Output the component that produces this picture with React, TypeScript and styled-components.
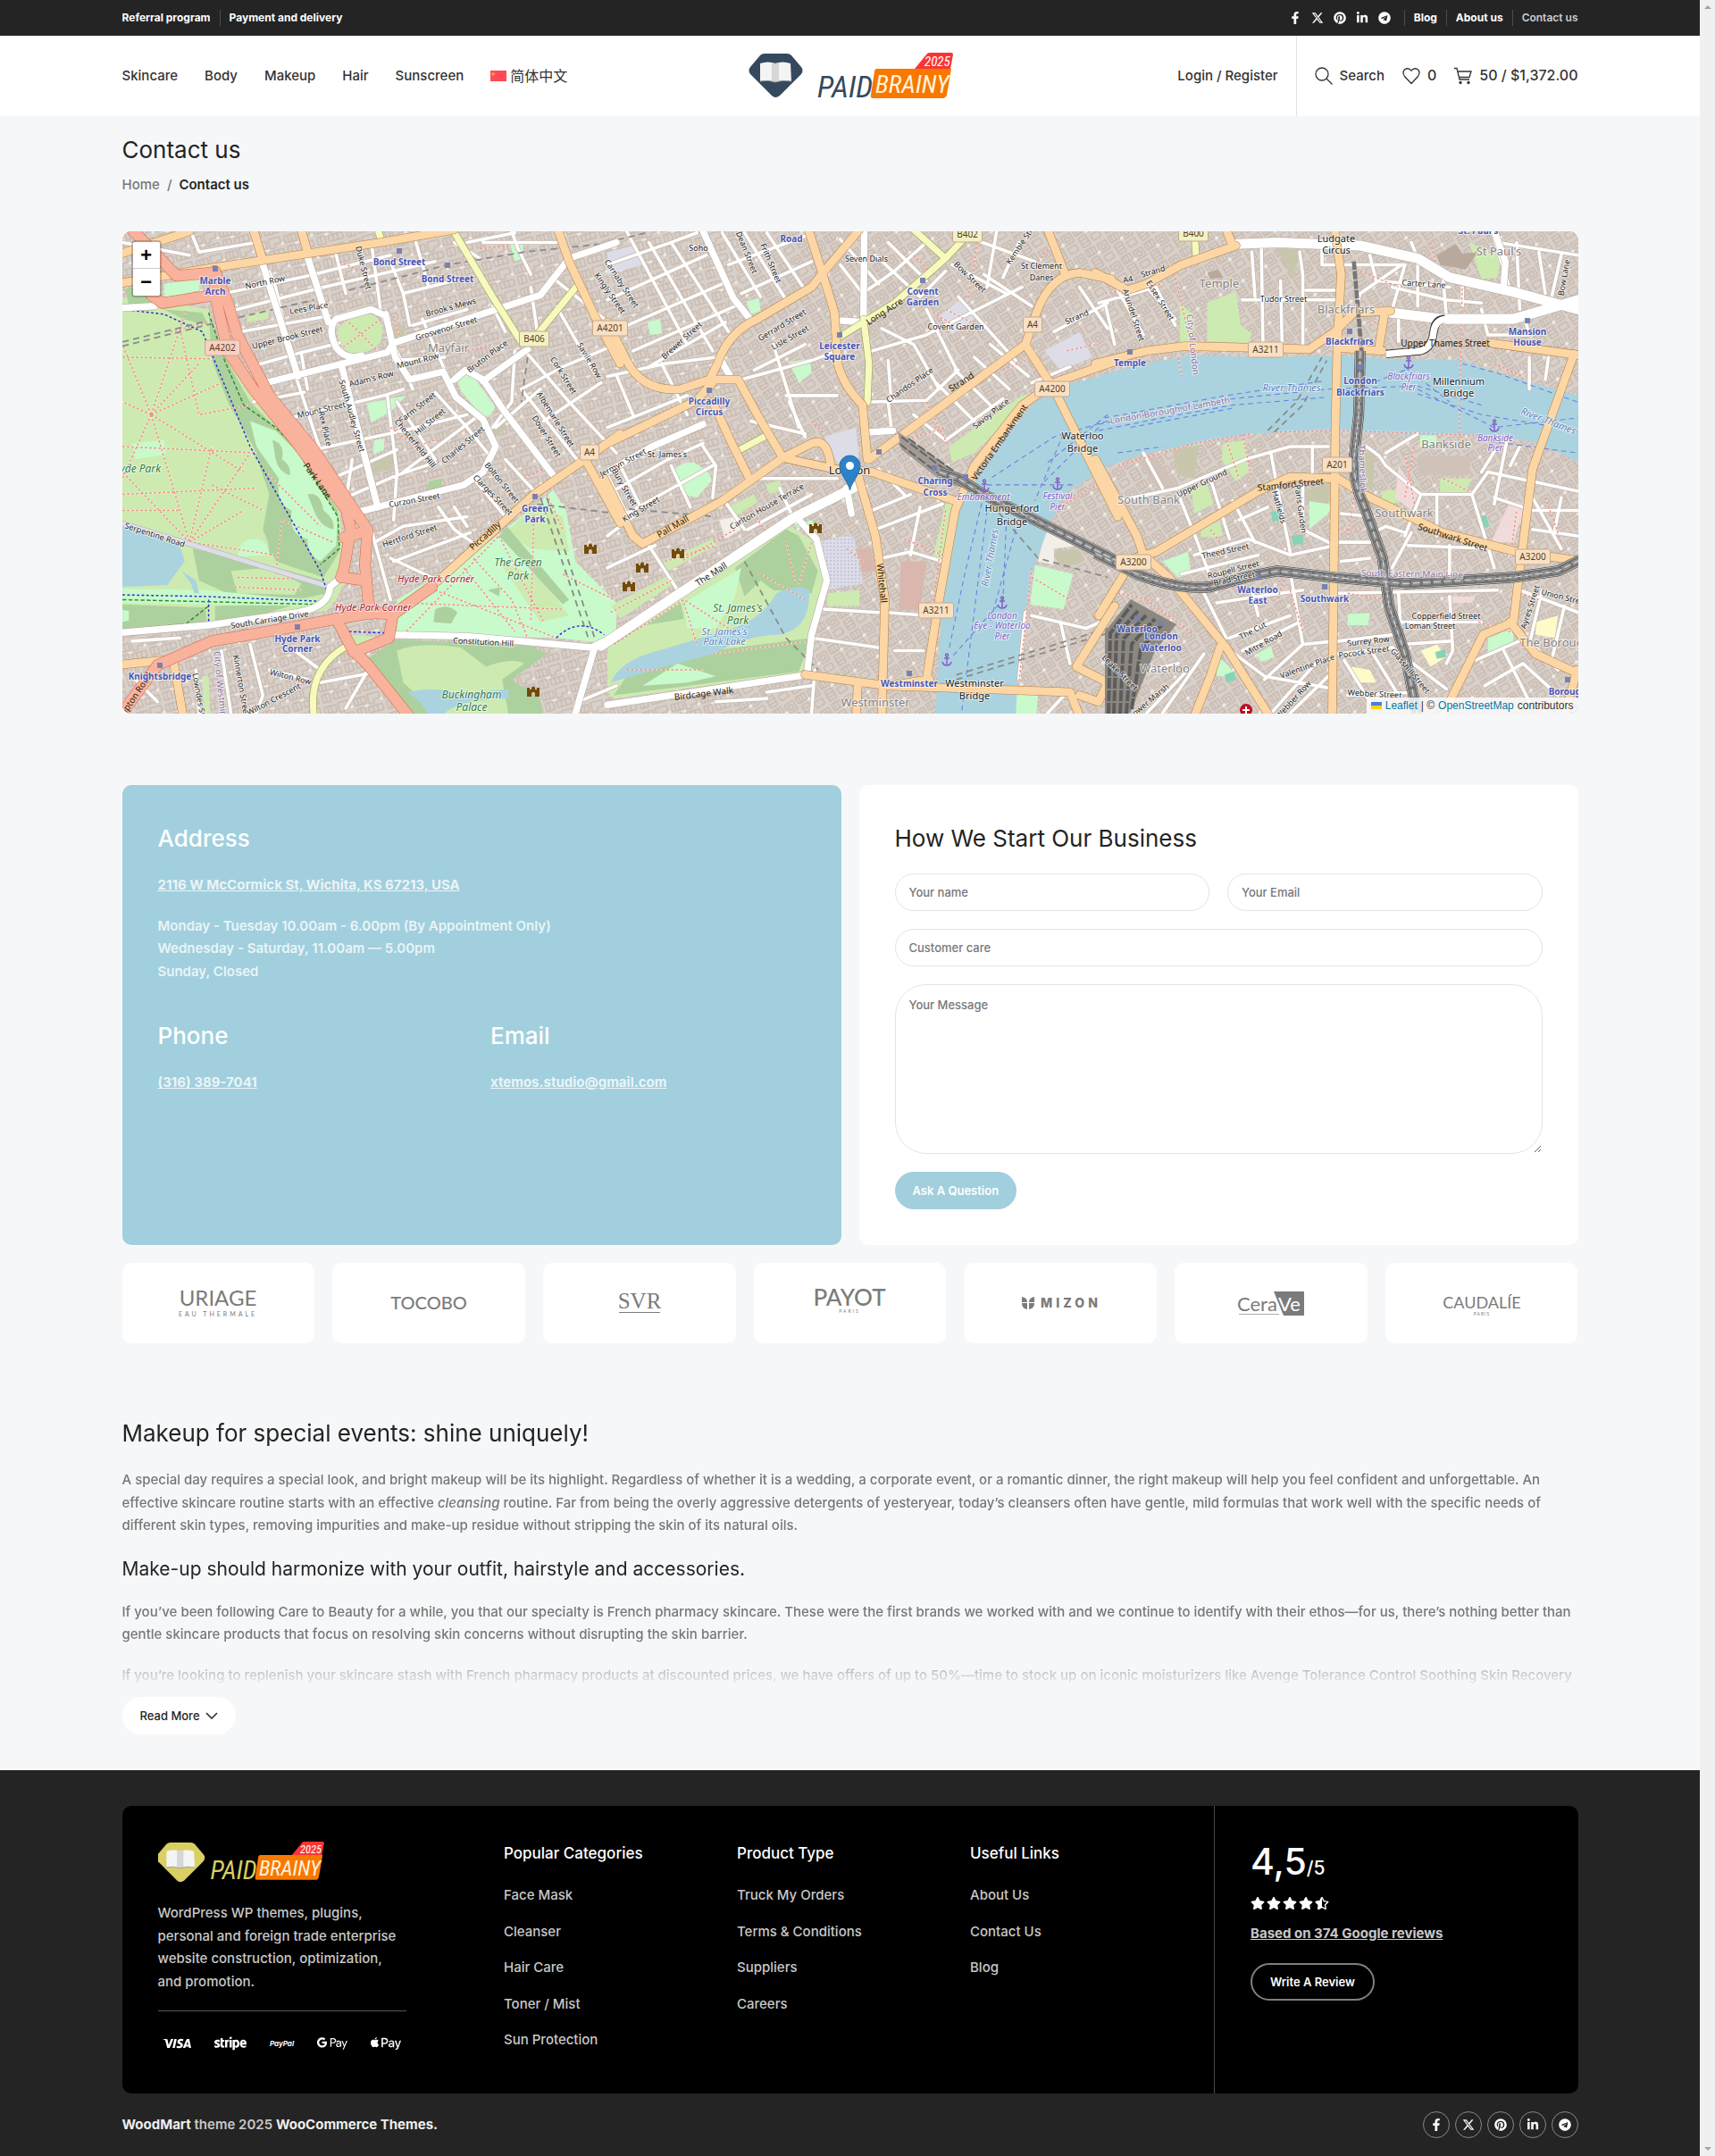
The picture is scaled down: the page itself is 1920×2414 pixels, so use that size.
import React from "react";
import styled, { createGlobalStyle, css } from "styled-components";
import { FaFacebookF, FaPinterest, FaLinkedinIn, FaTelegram, FaStripe, FaGooglePay, FaApplePay, FaStar, FaRegStar, FaStarHalf } from "react-icons/fa";
import { FaXTwitter } from "react-icons/fa6";
import { SiVisa } from "react-icons/si";

const sans = `Inter, "Noto Sans CJK SC", sans-serif`;

const GlobalStyle = createGlobalStyle`
  *, *::before, *::after { box-sizing: border-box; }
  body { margin: 0; background: #f6f7f9; color: #777; font-family: ${sans}; font-size: 15px; font-weight: 500; line-height: 1.7; }
  h1, h2, h3, h4, p, ul { margin: 0; padding: 0; }
  ul { list-style: none; }
  a { color: inherit; text-decoration: none; }
  button, input, textarea { font-family: inherit; margin: 0; }
`;

/* ---------- frame ---------- */

const Frame = styled.div`
  display: grid;
  grid-template-columns: minmax(0, 1fr) 17px;
`;

const ScrollTrack = styled.div`
  display: flex;
  flex-direction: column;
  justify-content: space-between;
  align-items: center;
  padding: 6px 0;
  background: #f0f0f0;
`;

const Arrow = styled.span<{ $down?: boolean }>`
  border: 4px solid transparent;
  ${(p) => (p.$down ? "border-top-color: #a3a3a3; border-bottom: 0;" : "border-bottom-color: #a3a3a3; border-top: 0;")}
`;

const Container = styled.div`
  max-width: 1660px;
  margin: 0 auto;
  padding: 0 15px;
`;

/* ---------- top bar ---------- */

const TopBar = styled.div`
  background: #242424;
  color: #fff;
`;

const TopRow = styled(Container)`
  display: flex;
  justify-content: space-between;
  align-items: center;
  height: 40px;
`;

const TopGroup = styled.div`
  display: flex;
  align-items: center;
  gap: 10px;
`;

const TopLink = styled.a<{ $muted?: boolean }>`
  font-size: 12px;
  font-weight: ${(p) => (p.$muted ? 600 : 700)};
  line-height: 18px;
  color: ${(p) => (p.$muted ? "#ccc" : "#fff")};
  & + & {
    padding-left: 10px;
    border-left: 1px solid #4c4c4c;
  }
`;

const TopSocial = styled.div`
  display: flex;
  align-items: center;
  gap: 11px;
  padding: 0 5px;
  a { display: flex; }
`;

const TopDivider = styled.span`
  width: 1px;
  height: 18px;
  background: #4c4c4c;
`;

/* ---------- header ---------- */

const Header = styled.header`
  background: #fff;
  color: #333;
`;

const HeaderRow = styled(Container)`
  display: grid;
  grid-template-columns: 1fr auto 1fr;
  align-items: center;
  height: 90px;
`;

const Nav = styled.nav`
  display: flex;
  gap: 30px;
  line-height: 24px;
`;

const NavLink = styled.a`
  display: flex;
  align-items: center;
  gap: 4px;
`;

const CjkLink = styled(NavLink)`
  font-size: 16px;
  font-weight: 400;
`;

const LogoLink = styled.a`
  display: flex;
`;

const Tools = styled.div`
  display: flex;
  justify-content: flex-end;
  align-items: center;
  align-self: stretch;
  gap: 20px;
`;

const ToolDivider = styled.span`
  align-self: stretch;
  width: 1px;
  background: #e2e2e2;
`;

const ToolLink = styled.a<{ $count?: boolean }>`
  display: flex;
  align-items: center;
  gap: 8px;
  font-size: ${(p) => (p.$count ? "16px" : "15px")};
`;

/* ---------- page title ---------- */

const PageTitle = styled.section`
  padding: 18px 0 40px;
`;

const Heading = styled.h2<{ $light?: boolean; $small?: boolean }>`
  font-size: ${(p) => (p.$small ? "21px" : "26px")};
  line-height: ${(p) => (p.$small ? "31px" : "39px")};
  font-weight: ${(p) => (p.$light ? 500 : 400)};
  color: ${(p) => (p.$light ? "#fff" : "#242424")};
`;

const Crumbs = styled.nav`
  display: flex;
  gap: 8px;
  margin-top: 8px;
  line-height: 24px;
  span:last-child { color: #242424; font-weight: 600; }
`;

/* ---------- map ---------- */

const MapBox = styled.div`
  position: relative;
  height: 540px;
  overflow: hidden;
  border-radius: 10px;
  background: #d9d0c9;
  > svg { display: block; width: 100%; height: 100%; }
`;

const ZoomControl = styled.div`
  position: absolute;
  top: 10px;
  left: 10px;
  display: flex;
  flex-direction: column;
  border: 2px solid rgba(0, 0, 0, 0.2);
  border-radius: 4px;
  background-clip: padding-box;
`;

const ZoomButton = styled.button`
  width: 30px;
  height: 30px;
  padding: 0;
  border: 0;
  background: #fff;
  color: #000;
  font: bold 22px/34px "Liberation Mono", monospace;
  &:first-child { border-bottom: 1px solid #ccc; border-radius: 2px 2px 0 0; }
  &:last-child { border-radius: 0 0 2px 2px; }
`;

const Attribution = styled.div`
  position: absolute;
  right: 0;
  bottom: 0;
  display: flex;
  align-items: center;
  gap: 4px;
  padding: 0 5px;
  background: rgba(255, 255, 255, 0.8);
  color: #333;
  font: 12px/18px "Liberation Sans", Arial, sans-serif;
  a { color: #0078a8; }
`;

/* ---------- contact cards ---------- */

const Cards = styled.div`
  display: grid;
  grid-template-columns: 1fr 1fr;
  gap: 20px;
  margin-top: 80px;
`;

const Card = styled.section<{ $blue?: boolean }>`
  padding: 40px;
  border-radius: 10px;
  background: ${(p) => (p.$blue ? "#a1cfdd" : "#fff")};
`;

const InfoText = styled.p`
  margin-top: 20px;
  font-weight: 600;
  color: rgba(255, 255, 255, 0.8);
`;

const InfoLink = styled.a`
  font-weight: 700;
  text-decoration: underline;
`;

const InfoColumns = styled.div`
  display: grid;
  grid-template-columns: 1fr 1fr;
  gap: 20px;
  margin-top: 40px;
`;

const Form = styled.form`
  display: grid;
  grid-template-columns: 1fr 1fr;
  gap: 20px;
  margin-top: 20px;
`;

const Field = styled.label<{ $wide?: boolean }>`
  display: flex;
  ${(p) => p.$wide && "grid-column: 1 / -1;"}
`;

const fieldStyle = css`
  width: 100%;
  border: 1px solid #e4e4e4;
  border-radius: 35px;
  background: #fff;
  color: #333;
  font-size: 13px;
  font-weight: 500;
  outline: 0;
  &::placeholder { color: #777; opacity: 1; }
`;

const TextInput = styled.input`
  ${fieldStyle}
  height: 42px;
  padding: 0 15px;
`;

const TextArea = styled.textarea`
  ${fieldStyle}
  height: 190px;
  padding: 12px 15px;
  line-height: 20px;
  resize: vertical;
`;

const Pill = styled.button<{ $tone: "blue" | "white" | "outline" }>`
  display: inline-flex;
  align-items: center;
  justify-content: center;
  gap: 6px;
  height: 42px;
  padding: 0 20px;
  border-radius: 35px;
  border: 0;
  font-size: 13px;
  line-height: 18px;
  font-weight: 600;
  cursor: pointer;
  justify-self: start;
  ${(p) => p.$tone === "blue" && "background: #a1cfdd; color: #fff;"}
  ${(p) => p.$tone === "white" && "background: #fff; color: #242424; font-weight: 500;"}
  ${(p) => p.$tone === "outline" && "background: transparent; color: #fff; border: 2px solid #7f7f7f;"}
`;

/* ---------- brands ---------- */

const Brands = styled.ul`
  display: grid;
  grid-template-columns: repeat(7, 1fr);
  gap: 20px;
  margin-top: 20px;
`;

const Brand = styled.li`
  display: flex;
  align-items: center;
  justify-content: center;
  height: 90px;
  border-radius: 10px;
  background: #fff;
  svg { fill: #7a7b7b; }
`;

/* ---------- article ---------- */

const Article = styled.article`
  height: 300px;
  margin-top: 81px;
  overflow: hidden;
  -webkit-mask-image: linear-gradient(#000 262px, transparent 304px);
  mask-image: linear-gradient(#000 262px, transparent 304px);
  h2, h3 { margin-bottom: 20px; }
  p { margin-bottom: 20px; }
`;

const ReadMore = styled.div`
  padding: 15px 0 40px;
`;

/* ---------- footer ---------- */

const Footer = styled.footer`
  padding-top: 40px;
  background: #242424;
  color: #c8c8c8;
`;

const FooterBox = styled.div`
  display: grid;
  grid-template-columns: 3fr 1fr;
  border-radius: 10px;
  background: #000;
`;

const FooterMain = styled.div`
  display: grid;
  grid-template-columns: minmax(0, 1fr) repeat(3, 261px);
  padding: 40px 12px 40px 40px;
`;

const About = styled.div`
  width: 278px;
  svg { display: block; }
  p { margin-top: 20px; padding-bottom: 20px; border-bottom: 1px solid #555; }
`;

const Payments = styled.ul`
  display: flex;
  justify-content: space-between;
  align-items: center;
  height: 32px;
  margin-top: 20px;
  padding: 0 5px;
  color: #fff;
`;

const PayPalMark = styled.li`
  font-size: 8px;
  line-height: 12px;
  font-weight: 700;
  font-style: italic;
`;

const LinkTitle = styled.h4`
  font-size: 17px;
  line-height: 27px;
  font-weight: 500;
  color: #fff;
`;

const LinkList = styled.ul`
  display: grid;
  gap: 15px;
  margin-top: 20px;
`;

const Review = styled.div`
  padding: 40px;
  border-left: 1px solid #4a4a4a;
`;

const Score = styled.p`
  font-size: 41px;
  line-height: 45px;
  color: #fff;
  small { font-size: 21px; }
`;

const Stars = styled.div`
  display: flex;
  gap: 2px;
  margin: 9px 0 13px;
  color: #fff;
`;

const HalfStar = styled.span`
  position: relative;
  display: flex;
  svg + svg { position: absolute; left: 0; top: 0; }
`;

const ReviewLink = styled.a`
  display: block;
  margin-bottom: 20px;
  font-weight: 700;
  text-decoration: underline;
`;

const Bottom = styled.div`
  display: flex;
  justify-content: space-between;
  align-items: center;
  height: 70px;
  font-weight: 600;
  b { font-weight: 700; color: #eee; }
`;

const Circles = styled.div`
  display: flex;
  gap: 6px;
`;

const Circle = styled.a`
  display: flex;
  align-items: center;
  justify-content: center;
  width: 30px;
  height: 30px;
  border: 1px solid #888;
  border-radius: 50%;
  color: #fff;
`;

const socials = [
  { name: "Facebook", Icon: FaFacebookF },
  { name: "X", Icon: FaXTwitter },
  { name: "Pinterest", Icon: FaPinterest },
  { name: "LinkedIn", Icon: FaLinkedinIn },
  { name: "Telegram", Icon: FaTelegram },
];

/* ---------- logo ---------- */

const narrow = `"Roboto Condensed", Roboto, sans-serif`;

function Logo({ dark }: { dark?: boolean }) {
  const tone = dark ? "#d9cf62" : "#34495e";
  return (
    <svg width={dark ? 186 : 230} height={dark ? 47 : 56} viewBox={dark ? "4 2 205 52" : "0 0 230 56"} role="img" aria-label="Paid Brainy 2025">
      <path fill={tone} d="M14 5 Q16 3 19 3 H44 Q47 3 49 5 L60 18 Q63 22 60 26 L36 50 Q31 54 27 50 L3 26 Q0 22 3 18 Z" />
      <path fill="#f4f4f4" d="M14 14 Q23 11 31 14 Q39 11 48 14 L49 34 Q39 32 31 35 Q23 32 14 34 Z" />
      <path fill="#c9c9c9" d="M27 13 L31 14 L35 13 L35 34 L31 35 L27 34 Z" opacity="0.7" />
      <path stroke="#999" strokeWidth="1" fill="none" d="M14 34 Q23 32 31 35 Q39 32 49 34" />
      <g transform={dark ? "translate(-4 2) scale(0.927)" : "translate(0 2)"}>
        <path fill="#fb3434" d="M187 18 L201 1 Q202 0 204 0 H228 Q230 0 230 2 L227 18 Z" />
        <path fill="#f87800" d="M145 18 H228 L223 47 Q222 51 218 51 H141 Q137 51 138 47 L142 21 Q142 18 145 18 Z" />
        <text x="78" y="50" fontFamily={narrow} fontStyle="italic" fontWeight="400" fontSize="34" fill={tone}>PAID</text>
        <text x="143" y="45" fontFamily={narrow} fontStyle="italic" fontWeight="400" fontSize="28" fill="#fff3dc">BRAINY</text>
        <text x="198" y="15" fontFamily={narrow} fontStyle="italic" fontWeight="400" fontSize="15" fill="#fff">2025</text>
      </g>
    </svg>
  );
}

/* ---------- map drawing ---------- */

// The map is drawn in three sheets, west to east, each in its own drafting units (2.8 per pixel).
const UNIT = 2.8;
const SHEETS = { a: -7, b: 543, c: 1093 };
type Sheet = keyof typeof SHEETS;

type Layer = { s: Sheet; d: string };

const parks: (Layer & { f: string })[] = [
  { s: "a", f: "#cdebb0", d: "M0 230 L120 240 L290 270 L330 400 L430 540 L560 700 L700 900 L720 1120 L690 1180 L660 1215 L0 1290 Z" },
  { s: "a", f: "#add19e", d: "M290 280 L330 400 L420 560 L560 700 L695 900 L700 1030 L650 1110 L500 1060 L460 960 L480 850 L430 700 L350 560 L300 430 Z" },
  { s: "a", f: "#c8facc", d: "M420 620 L500 650 L570 720 L640 830 L695 920 L690 1010 L640 1060 Q600 1040 600 990 Q540 980 550 900 Q500 880 510 800 L440 700 Z" },
  { s: "a", f: "#add19e", d: "M490 680 Q530 690 520 740 Q550 760 545 790 Q510 780 500 740 Z M600 850 Q640 840 650 900 Q690 930 680 960 Q640 950 620 900 Z M470 930 Q520 900 540 960 Q600 1010 560 1060 L480 1040 Z" },
  { s: "a", f: "#add19e", d: "M30 205 Q80 190 130 215 L120 250 L40 262 Z M150 270 L270 280 L290 320 L210 300 Z" },
  { s: "a", f: "#c8facc", d: "M150 190 L260 175 L262 210 L150 235 Z M385 1020 Q400 985 440 990 Q480 1000 480 1040 L380 1045 Z M50 690 L150 680 L155 725 L60 740 Z" },
  { s: "a", f: "#add19e", d: "M240 1020 L400 1050 L650 1120 L660 1160 L590 1175 L370 1170 L260 1120 Z M20 1195 L280 1205 L285 1262 L20 1272 Z M310 1200 L560 1195 L420 1240 L310 1245 Z" },
  { s: "a", f: "#cdebb0", d: "M360 1090 L480 1080 L580 1130 L560 1165 L380 1160 Z M215 1100 L250 1120 L230 1160 L170 1150 Z" },
  { s: "a", f: "#c8facc", d: "M20 1145 L280 1150 L640 1185 L640 1200 L20 1190 Z M20 1212 L40 1215 L40 1245 L20 1250 Z" },
  { s: "a", f: "#cdebb0", d: "M695 330 Q730 285 800 285 Q850 310 830 370 Q800 410 740 408 Q690 390 695 330 Z M410 285 L480 275 L475 300 L412 310 Z" },
  { s: "a", f: "#c8facc", d: "M1070 490 Q1090 465 1120 480 L1188 575 Q1180 605 1150 608 L1080 525 Z M785 565 L910 540 L860 590 L800 625 Z M810 680 L840 675 L840 710 L805 725 Z M1235 65 L1275 62 L1278 110 L1250 120 Z" },
  { s: "a", f: "#c8facc", d: "M880 1180 L1130 1030 L1320 880 L1370 835 L1410 900 L1440 1060 L1568 1190 L1568 1320 L1380 1300 L880 1290 Z" },
  { s: "a", f: "#cdebb0", d: "M1220 970 L1320 880 L1400 920 L1420 1030 L1300 1020 Z M1200 1060 L1330 1110 L1420 1230 L1330 1250 Z" },
  { s: "a", f: "#add19e", d: "M1225 950 L1420 1180 L1400 1195 L1200 980 Z M1000 1210 Q1040 1190 1070 1220 L1050 1255 L995 1250 Z M1165 1150 L1205 1140 L1200 1170 Z M980 810 L1020 800 L1022 835 L975 835 Z" },
  { s: "a", f: "#c8c7ae", d: "M870 320 L905 320 L905 360 L870 365 Z M1170 640 L1210 610 L1225 640 L1190 670 Z M810 735 L870 725 L870 770 L805 785 Z" },
  { s: "a", f: "#add19e", d: "M780 1370 L880 1305 L1300 1325 L1350 1350 L1240 1430 L1330 1490 L1340 1545 L940 1545 Z" },
  { s: "a", f: "#cdebb0", d: "M880 1340 Q950 1310 1080 1330 L1160 1390 Q1240 1360 1280 1380 L1210 1430 L1230 1540 L1010 1540 L900 1440 Z M740 1290 L850 1300 L740 1330 Z M735 915 L758 960 L735 965 Z M270 1420 L290 1420 L295 1540 L275 1540 Z" },
  { s: "b", f: "#cdebb0", d: "M0 1320 L560 940 L650 1000 L680 1100 L640 1380 L600 1410 L20 1490 L0 1470 Z" },
  { s: "b", f: "#add19e", d: "M400 1080 L560 960 L600 980 L660 1090 L640 1160 L520 1150 L480 1120 L430 1170 Z M20 1480 L60 1420 L330 1340 L640 1300 L600 1405 Z M120 1260 L230 1190 L240 1240 Z" },
  { s: "b", f: "#c8facc", d: "M240 1190 L420 1080 L400 1170 L340 1270 L250 1270 Z M110 1450 L220 1380 L340 1420 L250 1440 Z M640 930 L660 960 L580 950 Z" },
  { s: "b", f: "#c8facc", d: "M205 790 Q210 750 270 750 Q330 780 325 810 L280 860 L240 850 Z M570 435 L635 425 L640 470 L600 500 Z M435 245 L475 235 L480 275 L450 285 Z M125 310 L165 300 L172 345 L135 350 Z" },
  { s: "b", f: "#cdebb0", d: "M175 1060 L330 990 L340 1010 L190 1090 Z M10 1200 L200 1100 L215 1125 L40 1240 Z M380 890 L460 850 L470 875 L400 920 Z M495 820 L540 805 L550 835 L510 850 Z M1070 700 L1300 540 L1340 530 L1150 720 L1080 750 Z M1060 880 L1085 880 L1050 1060 L1020 1050 Z M690 1160 L790 1150 L790 1200 L690 1200 Z" },
  { s: "b", f: "#c8facc", d: "M1340 1070 L1460 1100 L1430 1210 L1325 1195 Z M1265 1480 L1350 1475 L1345 1540 L1265 1540 Z" },
  { s: "b", f: "#c8c7ae", d: "M1405 1030 L1480 1020 L1490 1060 L1440 1080 L1410 1060 Z" },
  { s: "b", f: "#f2efe9", d: "M1370 970 L1420 960 L1480 1010 L1400 1020 L1400 1070 L1350 1060 Z M350 930 L400 920 L420 960 L370 990 Z" },
  { s: "c", f: "#cdebb0", d: "M340 250 L430 215 L445 320 L480 345 L470 375 L340 370 Z M255 250 L300 290 L290 380 L255 380 Z M1160 60 L1260 100 L1250 170 L1200 175 Z M290 830 L340 820 L360 880 L300 910 Z M1070 800 L1170 800 L1150 845 L1070 845 Z M885 840 L945 835 L945 875 L890 880 Z M390 690 L460 680 L470 780 L430 810 L385 740 Z M320 950 L380 935 L390 980 L320 985 Z" },
  { s: "c", f: "#c8facc", d: "M660 870 Q700 855 730 890 L720 910 L660 960 Z M1220 1300 L1300 1270 L1300 1320 L1220 1350 Z M370 1360 Q410 1380 430 1420 L370 1420 Z M495 1350 L540 1325 L550 1360 L510 1375 Z M1010 660 L1060 665 L1055 705 L1005 700 Z M200 1060 L280 1030 L290 1100 L250 1110 Z M780 1225 L850 1222 L845 1260 L780 1260 Z" },
  { s: "c", f: "#c8c7ae", d: "M555 75 L630 85 L610 180 Z M230 710 L315 695 L300 800 L250 790 Z M830 700 L865 710 L860 830 L835 840 Z M640 840 L730 810 L720 880 L650 870 Z" },
  { s: "b", f: "#dddde8", d: "M655 1000 L770 975 L800 1130 L680 1150 Z M680 670 L780 640 L790 760 L720 750 Z M1040 290 L1110 235 L1150 300 L1080 350 Z M0 90 L80 70 L110 130 L0 160 Z M1370 400 L1480 340 L1520 420 L1420 460 Z" },
  { s: "b", f: "#d9b6ae", d: "M920 1060 L1000 1060 L980 1215 L915 1210 Z M780 1020 L825 1020 L840 1090 L800 1095 Z" },
  { s: "c", f: "#b9a99c", d: "M1060 100 L1120 65 L1140 95 L1190 90 L1150 145 L1070 130 Z M340 155 L375 145 L390 170 L350 175 Z" },
  { s: "c", f: "#d0c2b9", d: "M1000 730 L1170 730 L1160 790 L1000 790 Z M120 740 L170 720 L240 820 L200 850 Z" },
  { s: "c", f: "#f1dada", d: "M1290 870 L1340 880 L1300 1000 L1230 1000 Z M1090 1170 L1180 1170 L1170 1190 L1090 1190 Z M940 760 L1000 850 L980 900 L930 860 Z" },
  { s: "c", f: "#fdfbc8", d: "M790 1390 L850 1400 L870 1440 L800 1440 Z M1010 1340 L1060 1320 L1090 1360 L1040 1390 Z M1370 1250 L1440 1230 L1430 1300 L1370 1290 Z" },
  { s: "c", f: "#87d3b5", d: "M540 905 L575 900 L580 930 L545 935 Z M605 980 L640 975 L642 1005 L610 1008 Z M1190 920 L1215 915 L1225 950 L1200 955 Z M1055 1345 L1085 1335 L1090 1360 L1060 1365 Z M395 1415 L425 1405 L430 1430 L400 1440 Z" },
];

const water: Layer[] = [
  { s: "a", d: "M0 930 L20 940 L200 1010 L215 1060 L160 1135 L0 1140 Z M205 1090 L250 1120 L260 1160 L245 1160 L235 1130 Z" },
  { s: "a", d: "M915 1470 Q1000 1450 1080 1475 L1230 1460 L1230 1490 Q1070 1490 1020 1545 L980 1545 Q960 1500 915 1470 Z" },
  { s: "b", d: "M10 1440 Q40 1370 160 1340 L360 1280 Q480 1250 530 1160 Q600 1130 632 1150 Q640 1270 540 1290 Q440 1290 330 1350 L180 1390 L60 1425 Z" },
  { s: "b", d: "M1600 470 L1460 500 L1340 560 L1260 660 L1190 760 L1110 870 L1075 1000 L1050 1200 L1028 1545 L1280 1545 L1290 1350 L1330 1100 L1380 960 L1430 850 L1600 740 Z" },
  { s: "c", d: "M0 478 L120 445 L280 415 L560 420 L750 415 L900 425 L1140 430 L1250 470 L1520 545 L1520 755 L1380 690 L1250 665 L1000 665 L720 650 L480 660 L300 690 L120 730 L0 770 Z" },
];

const alleys: Layer[] = [
  { s: "a", d: "M340 220 L600 165 L860 100 M360 275 L650 200 L1000 120 M390 340 L670 290 M420 450 L580 405 L700 375 M430 560 L590 530 M550 610 L840 540 L900 520 M620 710 L900 650 L1100 600 M700 790 L880 710 M720 860 L880 790 L1000 750 M480 150 L500 200 L560 470 L640 710 M690 100 L720 220 M800 60 L830 280 L930 520 M850 540 L880 780 L870 930 M930 320 L1100 270 M900 220 L920 320 M580 405 L600 520" },
  { s: "a", d: "M870 430 L1030 420 M960 300 L1030 460 M1000 530 L1100 640 L1180 740 M880 560 L1000 740 M740 740 L720 870 M900 780 L1060 660 L1140 600 M1250 400 L1240 560 L1180 640 M1270 520 L1400 450 L1568 380 M1290 410 L1420 560 L1568 720 M1380 260 L1500 470 M1270 520 L1460 760 M1190 640 L1330 520 M1340 620 L1520 500 M800 960 L860 1180 M810 1000 L900 950 L1100 920 M870 1060 L1110 970 M860 1050 L1010 1120 M1010 890 L1060 960 L1130 1010 M1220 740 L1320 850 M1060 890 L1100 950 M1120 800 L1220 920" },
  { s: "a", d: "M330 1340 L360 1536 M420 1320 L460 1480 L440 1536 M250 1400 L260 1536 M480 1400 L600 1430 M560 1340 L640 1400 M640 1440 L800 1410 M60 1430 L130 1500 M50 1310 L200 1300 M720 1520 L790 1400 M1450 1500 L1568 1450 M1100 60 L1250 30 M1060 60 L1140 110 M1240 25 L1260 80 L1300 160 M1150 60 L1380 60 M240 40 L260 90 L440 60 M1380 180 L1568 330 M20 60 L230 100 M860 120 L900 220 L1060 180 M940 60 L980 200 M1180 260 L1220 340 M1300 200 L1320 340" },
  { s: "b", d: "M60 25 L250 380 M130 60 L330 400 M200 60 L380 340 M0 130 L200 60 L280 30 M0 240 L310 100 M40 330 L360 190 M80 400 L400 260 M130 450 L370 310 M360 30 L480 230 M430 30 L560 240 M500 30 L620 210 M380 130 L620 40 M420 220 L640 120 M170 440 L250 600 M0 480 L180 440 L340 420 M30 480 L80 600 M460 460 L620 380 M420 490 L640 430 L720 400 M520 380 L600 640 M560 540 L720 540 M450 620 L620 660 M570 560 L620 670" },
  { s: "b", d: "M0 640 L250 540 M0 850 L190 740 L300 690 M40 760 L110 900 M0 790 L60 910 L330 760 M200 760 L260 890 M300 700 L340 760 L330 860 M360 860 L430 960 M540 830 L590 940 M440 960 L640 850 M470 800 L720 800 M0 1080 L150 1010 M130 1010 L220 1150 M0 980 L80 920 M730 130 L800 220 L900 150 L1000 60 M730 50 L850 190 M840 100 L980 230 L1060 150 M880 60 L1000 180 M830 400 L1000 350 L1300 200 M860 330 L960 380 L1040 520 M1000 270 L1100 470 M1100 230 L1280 430 M1180 160 L1330 260 M1080 130 L1250 220 M830 560 L1000 555 L1100 460 M880 430 L890 560 M880 560 L890 640 L820 650" },
  { s: "b", d: "M1030 500 L1150 620 M1090 460 L1200 570 M1150 420 L1260 520 M1200 380 L1320 480 M960 600 L1060 680 L1240 550 M1330 500 L1450 450 M1120 40 L1340 120 M1220 25 L1190 200 M1290 60 L1240 170 M1400 340 L1568 250 M1480 200 L1568 330 M830 900 L950 850 M840 960 L1050 880 M860 1050 L950 1030 L1050 1060 M980 890 L950 1040 M880 1220 L1000 1230 M640 1300 L850 1330 M680 1210 L850 1220 M650 1400 L640 1536 M500 1470 L640 1450 M340 1500 L500 1490 M900 1340 L990 1340 M1330 1230 L1500 1270 L1568 1240 M1450 1460 L1380 1536 M1310 1220 L1290 1430 M1450 1380 L1420 1250 M850 770 L930 850" },
  { s: "c", d: "M0 250 L180 200 L240 320 M60 210 L140 350 M20 250 L50 380 M150 200 L240 300 M510 80 L515 380 M570 180 L575 380 M630 90 L640 160 L640 380 M700 70 L700 130 L960 130 M450 240 L740 240 M650 210 L740 210 M480 90 L490 230 M800 290 L820 220 L950 130 M850 100 L870 180 L1100 200 M960 130 L920 270 M1000 130 L1000 260 M920 200 L1090 240 L1200 250 M1080 180 L1090 290 M1140 190 L1140 260 M1240 50 L1290 210 M1310 60 L1320 270 M1380 90 L1400 220 M1450 100 L1420 230 M1250 60 L1504 100 M980 60 L1000 110 M1200 270 L1220 350 L1350 350 L1330 280 M940 300 L940 370 M1350 420 L1350 520 M1410 420 L1400 490" },
  { s: "c", d: "M60 870 L250 830 L460 740 L600 700 L720 700 M140 720 L200 830 M250 850 L310 1000 L350 1110 M350 800 L410 990 M540 720 L560 830 L600 1030 M670 700 L670 800 M640 820 L640 960 L740 1010 M420 870 L490 1000 M440 930 L530 890 M300 1040 L470 990 L600 1040 L740 1010 M260 1100 L500 1040 M330 1160 L400 1300 M370 1190 L500 1170 L640 1150 M410 1300 L600 1230 M450 1340 L630 1250 M480 1150 L500 1230 M600 1090 L640 1320 L740 1310 M520 1430 L640 1320 M400 1330 L520 1420 L740 1460 M540 1536 L680 1380 M600 1536 L720 1420 M840 700 L880 730 L900 760 L1010 850 L960 980 M900 720 L1000 660 M1010 850 L1170 850 L1220 780 L1504 840 M1170 850 L1240 1080 M1060 980 L1060 850 M860 970 L900 950 L960 970 M1240 860 L1330 890" },
  { s: "c", d: "M980 970 L920 1080 M970 1010 L1240 1020 M1100 1010 L1100 1100 M760 910 L860 920 M750 1000 L850 1000 M850 1050 L760 1060 M750 1160 L1250 1150 M940 1160 L950 1320 M950 1250 L1200 1250 M1100 1170 L1110 1340 L1090 1380 M950 1320 L1100 1310 M750 1310 L920 1290 M750 1350 L920 1330 L1090 1460 M780 1480 L1000 1470 M860 1350 L940 1480 M770 1370 L850 1500 M1200 780 L1250 700 M1280 680 L1240 880 M1290 760 L1320 700 M1340 900 L1504 900 M1450 860 L1430 960 M1320 1150 L1504 1220 M1390 1150 L1350 1320 M1460 1200 L1420 1370 M1180 1370 L1340 1300 L1440 1400 M1210 1450 L1330 1380 L1440 1480 M1270 1340 L1350 1500 M40 1430 L250 1380 M200 1536 L330 1350 M150 1536 L280 1400 M1360 860 L1450 1020 M1360 960 L1500 980" },
];

const lanes: Layer[] = [
  { s: "a", d: "M460 130 L570 480 M600 105 L665 310 M450 505 L850 405 L870 375 L1330 225 L1420 110 L1568 60 M845 285 L875 420 L920 490 L1025 465 M1025 465 L1065 545 L1150 615 L1190 700 L1150 780 L1090 820 L760 905 M1060 490 L1095 460 L1150 490 L1210 580 L1370 790 M1150 495 L1290 395 M705 440 L820 890 M690 300 Q660 330 690 390 Q720 430 770 415 M690 300 L800 270 L845 290 M0 1285 L290 1260 L570 1220 Q670 1200 670 1140 L700 1115 M870 1290 L1100 1295 L1490 1330 L1568 1290 M1500 1330 L1440 1536 M20 265 L120 260" },
  { s: "b", d: "M0 1510 L630 1415 M600 930 L655 990 L688 1120 L640 1290 L625 1420 M300 25 L395 235 L455 310 M350 420 L385 480 M805 25 L803 290 M735 305 L800 310 M0 780 L140 700 L300 630 M815 655 L895 650 M750 830 L765 910" },
  { s: "c", d: "M1240 25 L1275 120 L1270 190" },
];

const avenues: Layer[] = [
  { s: "b", d: "M-20 1325 L580 925 L780 825" },
  { s: "c", d: "M430 65 L560 60 L820 70 L1000 110 L1100 170 L1300 215 L1520 275 M915 280 L1080 300 L1300 300 L1520 235" },
];

const yellow: Layer[] = [
  { s: "a", d: "M1055 20 L1180 230 L1275 380 M1315 355 L1450 190 M820 20 L830 50 M620 1545 Q600 1400 715 1330" },
  { s: "b", d: "M960 20 L1060 110 L1130 35 M1060 110 L900 250 L730 355 M803 300 L820 440 L815 560 M415 710 L490 670" },
  { s: "c", d: "M300 25 L305 100" },
];

const primary: Layer[] = [
  { s: "a", d: "M0 190 L300 140 L600 95 L830 60 L1060 20 M430 20 L458 110 M580 20 L602 95 M1385 20 L1420 120 L1500 290 L1580 440 M900 1200 L1010 1120 L1200 950 L1310 850 L1470 740 L1580 660 M1470 740 L1580 940 M0 1385 L150 1370 M180 1375 L210 1545 M0 100 L230 25" },
  { s: "b", d: "M0 310 L60 430 Q110 530 230 520 L320 490 L410 490 L470 600 L550 735 M-10 695 L280 555 L330 500 M320 490 L345 440 Q380 340 470 300 L640 200 L680 150 L790 20 M630 20 L672 150 L712 280 L722 440 Q740 510 800 570 L815 740 M330 560 L390 690 L440 790 M550 735 L360 870 L110 1005 L80 980 L-10 800 M550 735 L640 690 Q690 670 700 760 M550 735 L710 770 L830 780 L1090 870" },
  { s: "b", d: "M820 740 L1310 380 L1345 280 Q1390 160 1480 155 L1580 175 M1380 20 L1435 160 M1310 380 L1400 520 L1500 720 L1600 920 M780 770 L840 980 L870 1180 L860 1545 M620 1415 L880 1450 L1010 1430 M1000 1430 L1040 1180 L1090 900 L1150 760 L1300 570 L1400 500 L1600 430 M880 1450 L1450 1470 L1480 1545 M780 1545 L785 1440 M1590 1200 L1470 1390 L1568 1440 L1540 1500 L1480 1480" },
  { s: "c", d: "M-10 155 L90 210 L150 190 L260 130 L430 70 M400 20 L420 70 M740 20 L760 160 L748 380 L742 640 L732 1545 M-10 440 L150 400 L270 385 L480 390 L660 395 L740 340 L800 280 L915 275 M895 290 L880 380 M750 390 L890 400 M1225 375 L1520 415 M1490 410 L1360 770 L1312 1150 L1300 1250 L1205 1290 L1110 1480 L1080 1545" },
  { s: "c", d: "M180 1030 L500 840 L600 795 L750 800 L830 850 L1080 970 L1310 1030 L1520 1060 M-10 740 L120 980 L140 1040 L220 1110 L400 1330 L535 1545 M180 1030 L110 1050 L0 1230 M380 1330 L350 1420 L300 1545 M1290 1250 L1370 1350 L1520 1420 M1500 1400 L1460 1545" },
];

const trunk: Layer[] = [
  { s: "a", d: "M50 20 L190 165 L300 155 M110 225 L145 250 L310 225 M310 150 L310 225 L350 400 L430 520 L560 680 L722 900 L735 960 L715 1080 L705 1110 M310 150 L350 250 L380 350 L480 540 L620 710 L740 890 L788 960 L780 1070 L790 1180 L800 1225 M0 1560 L130 1385 L300 1310 L560 1265 L690 1240 L800 1222 L870 1225 L990 1140 M690 1240 L740 1335 L790 1385 L930 1560 M745 1345 L855 1300 L868 1225 M715 985 L785 965 M712 1110 L780 1120" },
];

const rails: Layer[] = [
  { s: "b", d: "M1040 780 L1100 800 L1180 850 L1400 960 L1600 1060" },
  { s: "c", d: "M-10 1035 L120 1100 Q250 1150 350 1140 L480 1105 L560 1090 L740 1110 L960 1130 L1300 1110 L1440 1090 L1520 1050 M820 400 L815 600 L800 740 Q800 820 830 880 L890 1050 L910 1200 L960 1350 L1000 1545" },
];

const footways: Layer[] = [
  { s: "a", d: "M20 420 L300 425 M110 600 L20 380 M110 600 L220 270 M110 600 L20 560 M110 600 L260 440 M110 600 L400 780 M110 600 L230 1000 M110 600 L20 800 M110 600 L330 500 M230 1000 L20 780 M230 1000 L300 700 M230 1000 L420 720 M230 1000 L500 1040 M230 1000 L400 900 M20 850 L440 830 M500 1100 L520 930 L680 1000 M470 780 L640 950 M900 1290 L1200 980 M900 1190 L1400 1210 M1200 980 L1340 1250 M1090 1080 L1250 1280 M1310 900 L1300 1250 M1000 1150 L1380 1300 M380 1110 L570 1115 M370 1140 L580 1150 M720 300 L820 400 M830 300 L710 390" },
  { s: "a", d: "M200 330 L260 600 L420 570 M170 340 L290 310 M300 820 L460 900 M20 700 L440 720 M20 900 L200 900 M1350 850 L1400 960 M1110 1040 L1240 1180 L1290 1300 M1140 80 L1230 70 M1400 1100 L1560 1180 M700 120 L790 160 M870 290 L900 400 M1280 800 L1360 760 M1100 400 L1180 380 M860 640 L940 700 L1000 680" },
  { s: "b", d: "M20 1320 L240 1180 L380 1270 M60 1400 L300 1400 M330 1350 L630 1310 M480 1100 L620 1180 M240 1190 L280 1320 M640 1000 L600 1130 M180 1060 L340 1010 M10 1220 L200 1120 M1000 560 L1070 700 M900 690 L1060 640 M1330 1080 L1290 1440 M1060 900 L1020 1200 M930 990 L1050 1040 M1400 900 L1568 800" },
  { s: "b", d: "M400 960 L230 1060 M450 900 L520 1000 M560 1000 L590 1130 M640 620 L680 660 M960 100 L1010 150 M1020 280 L1120 340 M1060 270 L1140 310 M1330 1110 L1450 1180 M750 1020 L800 1060 M1060 1040 L1040 1190 M1400 60 L1350 120 M1160 60 L1130 240 M1240 460 L1310 430 M1440 400 L1530 380" },
  { s: "c", d: "M230 130 L300 420 M540 655 L740 650 L900 655 L1200 665 M1140 190 L1130 670 M60 760 L300 690 L480 660 M960 720 L990 880 M600 1150 L640 1280 M150 1180 L300 1290 M800 860 L780 980 M1290 1050 L1310 900 M350 960 L380 1000 M1190 1250 L1320 1290" },
  { s: "c", d: "M20 220 L200 190 M250 420 L260 480 M820 150 L940 200 M1040 60 L1060 140 L1180 180 M1180 90 L1330 90 M850 320 L900 290 M1240 440 L1330 480 M400 680 L440 800 M450 660 L480 800 M960 860 L990 700 M1080 800 L1160 840 M760 960 L830 960 M1400 860 L1450 1000 M590 1090 L560 1180 M780 1160 L900 1180 M1320 1160 L1380 1180 M60 1160 L160 1180" },
];

const cycle: Layer[] = [
  { s: "a", d: "M20 270 L150 285 L270 340 L300 410 L420 700 L640 1090 L660 1150 M20 1165 L280 1170 L640 1185 M30 1290 L300 1255 M290 1180 L290 1260 M730 1280 L860 1285 L1240 1300 L1480 1325 M1380 1300 Q1450 1230 1530 1290" },
];

const ferries: Layer[] = [
  { s: "b", d: "M1568 620 L1400 670 L1200 800 M1430 660 L1340 870 M1568 600 L1380 750 M1180 850 L1120 1100 L1070 1340 M1250 950 L1240 1180 L1080 1360 M1190 900 L1110 1536 M1280 960 L1200 1250 M1190 820 L1460 820 M1540 640 L1360 820" },
  { s: "c", d: "M0 630 L200 590 L420 550 L720 520 L1000 510 L1200 570 M0 650 L200 610 L420 570 L720 545 M20 610 L400 540 L700 495 M100 640 L420 580 M960 460 L860 500 M1000 520 L1240 640 L1504 610 M1000 535 L1200 600 L1500 650 M960 450 L1100 560 M60 720 L200 700 M1140 440 L1250 470 L1500 560 M1200 680 L1500 720" },
];

const tunnels: Layer[] = [
  { s: "a", d: "M20 385 L280 320 L620 240 M20 372 L270 310 M730 210 L1040 130 L1280 90 L1568 60 M1290 420 L1270 560 M1330 860 L1480 1300 M1350 860 L1500 1300 M1320 880 L1568 910" },
  { s: "b", d: "M0 60 L120 30 M0 890 L340 920 M430 1060 L560 1300 L660 1400 M1160 830 L1350 1050 L1568 1110 M1568 1270 L1080 1420 M1568 1285 L1080 1435" },
  { s: "c", d: "M530 650 L620 560 L700 420 M550 655 L640 570 L715 430" },
];

type Kind = "street" | "main" | "area" | "town" | "station" | "park" | "corner" | "pier" | "bridge" | "river" | "border";

const kinds: Record<Kind, { size: number; fill: string; weight?: number; italic?: boolean }> = {
  street: { size: 9, fill: "#1c1c1c" },
  main: { size: 10, fill: "#2a1a08" },
  area: { size: 13, fill: "#85817f" },
  town: { size: 13, fill: "#222" },
  station: { size: 10, fill: "#4a56b4", weight: 700 },
  park: { size: 12, fill: "#2f7d4a", italic: true },
  corner: { size: 11, fill: "#a8222e", italic: true },
  pier: { size: 10, fill: "#8461c4", italic: true },
  bridge: { size: 11, fill: "#222" },
  river: { size: 11, fill: "#6486bf", italic: true },
  border: { size: 10, fill: "#8b6f9c" },
};

type Label = [Sheet, string, number, number, Kind, number?];

const labels: Label[] = [
  ["a", "North Row", 468, 188, "street", -12],
  ["a", "Lees Place", 606, 270, "street", -10],
  ["a", "Upper Brook Street", 537, 360, "street", -14],
  ["a", "Brook's Mews", 1050, 265, "street", -15],
  ["a", "Grosvenor Street", 1037, 332, "street", -17],
  ["a", "Duke Street", 772, 140, "street", 76],
  ["a", "Mount Row", 945, 435, "street", -14],
  ["a", "Adam's Row", 800, 490, "street", -14],
  ["a", "Bruton Place", 1165, 420, "street", -37],
  ["a", "Mount Street", 643, 588, "street", -13],
  ["a", "Rex Place", 652, 645, "street", 77],
  ["a", "South Audley Street", 735, 605, "street", 74],
  ["a", "Farm Street", 947, 580, "street", -38],
  ["a", "Hill Street", 985, 625, "street", -40],
  ["a", "Chesterfield Hill", 935, 692, "street", 51],
  ["a", "Charles Street", 1090, 696, "street", -40],
  ["a", "Curzon Street", 934, 870, "street", -10],
  ["a", "Hertford Street", 920, 982, "street", -18],
  ["a", "Bolton Street", 1208, 815, "street", 51],
  ["a", "Clarges Street", 1178, 855, "street", 46],
  ["a", "Cork Street", 1400, 480, "street", 58],
  ["a", "Savile Row", 1480, 432, "street", 59],
  ["a", "Albemarle Street", 1375, 615, "street", 58],
  ["a", "Dover Street", 1348, 670, "street", 58],
  ["a", "Kingly Street", 1545, 220, "street", 55],
  ["a", "Jermyn Street", 1590, 752, "street", -28],
  ["a", "Park Lane", 628, 808, "main", 55],
  ["a", "Piccadilly", 1160, 982, "main", -41],
  ["a", "Serpentine Road", 120, 980, "street", 18],
  ["a", "South Carriage Drive", 482, 1245, "street", -9],
  ["a", "Constitution Hill", 1152, 1315, "street", 3],
  ["a", "Brompton Road", 50, 1500, "main", -56],
  ["a", "Lowndes Street", 260, 1500, "street", 80],
  ["a", "Kinnerton Street", 390, 1450, "street", 80],
  ["a", "Wilton Row", 545, 1425, "street", 14],
  ["a", "Wilton Crescent", 495, 1495, "street", -28],
  ["a", "City of Westminster", 325, 1470, "border", 84],
  ["a", "Mayfair", 1042, 402, "area"],
  ["a", "Hyde Park", 65, 780, "park"],
  ["a", "The Green", 1261, 1076, "park"],
  ["a", "Park", 1261, 1116, "park"],
  ["a", "Buckingham", 1114, 1490, "park"],
  ["a", "Palace", 1114, 1530, "park"],
  ["a", "Hyde Park Corner", 1003, 1126, "corner"],
  ["a", "Hyde Park Corner", 805, 1216, "corner"],
  ["a", "Marble", 312, 190, "station"],
  ["a", "Arch", 312, 223, "station"],
  ["a", "Bond Street", 888, 132, "station"],
  ["a", "Bond Street", 1040, 184, "station"],
  ["a", "Green", 1313, 904, "station"],
  ["a", "Park", 1313, 937, "station"],
  ["a", "Hyde Park", 568, 1312, "station"],
  ["a", "Corner", 568, 1345, "station"],
  ["a", "Knightsbridge", 137, 1431, "station"],
  ["b", "Soho", 286, 88, "street"],
  ["b", "Dean Street", 435, 92, "street", 68],
  ["b", "Frith Street", 510, 125, "street", 67],
  ["b", "Carnaby Street", 42, 190, "street", 57],
  ["b", "Brewer Street", 236, 370, "street", -42],
  ["b", "Gerrard Street", 550, 322, "street", -31],
  ["b", "Lisle Street", 575, 360, "street", -29],
  ["b", "Seven Dials", 812, 119, "street"],
  ["b", "Long Acre", 872, 280, "main", -33],
  ["b", "Bow Street", 1133, 170, "street", 44],
  ["b", "Kemble Street", 1305, 60, "street", -56],
  ["b", "St Clement", 1361, 144, "street"],
  ["b", "Danes", 1361, 179, "street"],
  ["b", "Covent Garden", 1093, 332, "street"],
  ["b", "Chandos Place", 950, 510, "street", -35],
  ["b", "Strand", 1112, 502, "main", -33],
  ["b", "Strand", 1474, 296, "street", -24],
  ["b", "Savoy Place", 1204, 600, "street", -38],
  ["b", "Victoria Embankment", 1232, 690, "main", -55],
  ["b", "St. James's", 187, 734, "street"],
  ["b", "Bury Street", 50, 830, "street", 60],
  ["b", "King Street", 105, 900, "street", -31],
  ["b", "Pall Mall", 206, 955, "main", -30],
  ["b", "Carlton House Terrace", 500, 890, "street", -30],
  ["b", "The Mall", 328, 1102, "main", -33],
  ["b", "Whitehall", 858, 1128, "main", 84],
  ["b", "Birdcage Walk", 303, 1478, "main", -7],
  ["b", "London", 760, 786, "town"],
  ["b", "Westminster", 840, 1516, "area"],
  ["b", "St. James's", 409, 1217, "park"],
  ["b", "Park", 409, 1257, "park"],
  ["b", "St. James's", 366, 1290, "river"],
  ["b", "Park Lake", 366, 1322, "river"],
  ["b", "River Thames", 1205, 1050, "river", -80],
  ["b", "Road", 576, 60, "station"],
  ["b", "Leicester", 728, 395, "station"],
  ["b", "Square", 728, 428, "station"],
  ["b", "Covent", 989, 225, "station"],
  ["b", "Garden", 989, 258, "station"],
  ["b", "Piccadilly", 318, 569, "station"],
  ["b", "Circus", 318, 602, "station"],
  ["b", "Charing", 1027, 818, "station"],
  ["b", "Cross", 1027, 854, "station"],
  ["b", "Westminster", 946, 1454, "station"],
  ["b", "Embankment", 1180, 867, "pier"],
  ["b", "Festival", 1411, 864, "pier"],
  ["b", "Pier", 1411, 898, "pier"],
  ["b", "London", 1237, 1239, "pier"],
  ["b", "Eye - Waterloo", 1237, 1272, "pier"],
  ["b", "Pier", 1237, 1306, "pier"],
  ["b", "Waterloo", 1489, 677, "bridge"],
  ["b", "Bridge", 1489, 717, "bridge"],
  ["b", "Hungerford", 1268, 905, "bridge"],
  ["b", "Bridge", 1268, 945, "bridge"],
  ["b", "Westminster", 1151, 1454, "bridge"],
  ["b", "Bridge", 1151, 1492, "bridge"],
  ["c", "Ludgate", 746, 60, "bridge"],
  ["c", "Circus", 746, 94, "bridge"],
  ["c", "St Paul's", 1253, 100, "area"],
  ["c", "St. Paul's", 1190, 34, "station"],
  ["c", "Temple", 377, 201, "area"],
  ["c", "Strand", 170, 155, "street", -16],
  ["c", "A4", 91, 180, "street", -12],
  ["c", "Essex Street", 190, 243, "street", 58],
  ["c", "Arundel Street", 105, 288, "street", 72],
  ["c", "Tudor Street", 580, 246, "street"],
  ["c", "Carter Lane", 1020, 193, "street", 4],
  ["c", "Bow Lane", 1462, 170, "street", -80],
  ["c", "Blackfriars", 775, 283, "area"],
  ["c", "Upper Thames Street", 1087, 386, "main"],
  ["c", "Mansion", 1344, 350, "station"],
  ["c", "House", 1344, 383, "station"],
  ["c", "Blackfriars", 787, 382, "station"],
  ["c", "London", 821, 503, "station"],
  ["c", "Blackfriars", 821, 540, "station"],
  ["c", "Temple", 98, 449, "station"],
  ["c", "Blackfriars", 971, 491, "pier"],
  ["c", "Pier", 971, 524, "pier"],
  ["c", "Bankside", 1242, 682, "pier"],
  ["c", "Pier", 1242, 715, "pier"],
  ["c", "Millennium", 1129, 508, "bridge"],
  ["c", "Bridge", 1129, 542, "bridge"],
  ["c", "River Thames", 605, 525, "river"],
  ["c", "River Thames", 1408, 625, "river", 21],
  ["c", "London Borough of Lambeth", 225, 590, "border", -10],
  ["c", "City of London", 292, 380, "border", 84],
  ["c", "Bankside", 1089, 706, "area"],
  ["c", "South Bank", 157, 878, "area"],
  ["c", "Southwark", 958, 922, "area"],
  ["c", "Waterloo", 208, 1407, "area"],
  ["c", "The Borough", 1430, 1327, "area"],
  ["c", "Upper Ground", 325, 818, "street", -25],
  ["c", "Stamford Street", 603, 822, "main", -6],
  ["c", "Hatfields", 562, 890, "street", 74],
  ["c", "Paris Garden", 630, 895, "street", 82],
  ["c", "Thameslink", 822, 770, "border", 88],
  ["c", "Southwark Street", 1110, 988, "main", 18],
  ["c", "Theed Street", 397, 1030, "street", -12],
  ["c", "Roupell Street", 424, 1090, "street", -14],
  ["c", "Brad Street", 426, 1118, "street", -12],
  ["c", "South Eastern Main Line", 983, 1102, "border", 1],
  ["c", "Waterloo", 497, 1158, "station"],
  ["c", "East", 497, 1194, "station"],
  ["c", "Southwark", 708, 1186, "station"],
  ["c", "Waterloo", 120, 1282, "station"],
  ["c", "London", 197, 1305, "station"],
  ["c", "Waterloo", 197, 1342, "station"],
  ["c", "Borough", 1470, 1478, "station"],
  ["c", "The Cut", 485, 1280, "street", -28],
  ["c", "Mitre Road", 518, 1320, "street", -30],
  ["c", "Valentine Place", 655, 1392, "street", -20],
  ["c", "Webber Row", 612, 1495, "street", -48],
  ["c", "Lower Marsh", 160, 1500, "street", -40],
  ["c", "Leake Street", 65, 1410, "street", 45],
  ["c", "Surrey Row", 845, 1312, "street", -6],
  ["c", "Pocock Street", 832, 1348, "street", -8],
  ["c", "Webber Street", 864, 1478, "street", 3],
  ["c", "Glasshill Street", 975, 1405, "street", 50],
  ["c", "Copperfield Street", 1089, 1240, "street"],
  ["c", "Loman Street", 1040, 1270, "street"],
  ["c", "Ayres Street", 1355, 1205, "street", -72],
  ["c", "Union Street", 1460, 1175, "street", 14],
];

const shields: [Sheet, string, number, number, string][] = [
  ["a", "A4202", 332, 389, "#f9d0c4"],
  ["a", "B406", 1310, 361, "#f1f2c4"],
  ["a", "A4201", 1549, 327, "#f8e0c4"],
  ["a", "A4", 1483, 718, "#f8e0c4"],
  ["b", "B402", 1129, 34, "#f1f2c4"],
  ["b", "A4", 1333, 316, "#f8e0c4"],
  ["b", "A4200", 1395, 518, "#f8e0c4"],
  ["b", "A3211", 1029, 1213, "#f8e0c4"],
  ["c", "B400", 297, 30, "#f1f2c4"],
  ["c", "A3211", 523, 395, "#f8e0c4"],
  ["c", "A201", 747, 757, "#f8e0c4"],
  ["c", "A3200", 109, 1062, "#f8e0c4"],
  ["c", "A3200", 1360, 1043, "#f8e0c4"],
];

const stops: [Sheet, number, number][] = [
  ["a", 310, 142], ["a", 887, 87], ["a", 1040, 132], ["a", 1313, 856], ["a", 568, 1265], ["a", 137, 1386],
  ["b", 989, 179], ["b", 728, 349], ["b", 319, 523], ["b", 851, 716], ["b", 1026, 766], ["b", 1122, 796], ["b", 946, 1411],
  ["c", 98, 403], ["c", 787, 338], ["c", 821, 451], ["c", 1344, 305], ["c", 497, 1110], ["c", 708, 1139], ["c", 120, 1237], ["c", 197, 1254], ["c", 1470, 1430],
];

const castles: [Sheet, number, number][] = [
  ["a", 1487, 1018], ["a", 1308, 1468], ["b", 67, 1138], ["b", 109, 1078], ["b", 221, 1033], ["b", 652, 956],
];

const anchors: [Sheet, number, number][] = [
  ["b", 1182, 822], ["b", 1411, 818], ["b", 1237, 1190], ["b", 1063, 1368], ["c", 971, 438], ["c", 1240, 636],
];

const px = (s: Sheet, x: number) => Math.round(x / UNIT + SHEETS[s]);
const py = (y: number) => Math.round(y / UNIT - 9);

function Lines({ list, color, width, dash, cap = "round" }: { list: Layer[]; color: string; width: number; dash?: string; cap?: "round" | "butt" }) {
  return (
    <g fill="none" stroke={color} strokeWidth={width} strokeDasharray={dash} strokeLinecap={cap} strokeLinejoin="round">
      {list.map((l, i) => (
        <path key={i} d={l.d} transform={`translate(${SHEETS[l.s]} -9) scale(${1 / UNIT})`} />
      ))}
    </g>
  );
}

function LondonMap() {
  return (
    <svg viewBox="0 0 1630 540" preserveAspectRatio="xMidYMid slice" role="img" aria-label="Street map of central London">
      <defs>
        <pattern id="houses" width="34" height="26" patternUnits="userSpaceOnUse" patternTransform="rotate(-16)">
          <rect width="34" height="26" fill="#d9d0c9" />
          <path d="M2 3 H15 V11 H2 Z M6 3 V11 M10 3 V11 M18 2 H31 V9 H24 V13 H18 Z M3 15 H12 V24 H3 Z M7 15 V24 M16 16 H32 V23 H16 Z M21 16 V23 M26 16 V23" fill="none" stroke="#bfb1a6" strokeWidth="1" />
          <path d="M12 13 H17 V15 H12 Z M31 9 H34 V12 H31 Z" fill="#efebe5" />
        </pattern>
        <pattern id="housesEast" width="30" height="28" patternUnits="userSpaceOnUse" patternTransform="rotate(-32)">
          <rect width="30" height="28" fill="#d9d0c9" />
          <path d="M2 2 H13 V10 H2 Z M5 2 V10 M9 2 V10 M17 3 H28 V14 H17 Z M20 6 H25 V11 H20 Z M3 14 H12 V26 H3 Z M3 18 H12 M3 22 H12 M17 18 H27 V25 H17 Z" fill="none" stroke="#bfb1a6" strokeWidth="1" />
          <path d="M13 10 H17 V13 H13 Z" fill="#efebe5" />
        </pattern>
        <pattern id="gravel" width="4" height="4" patternUnits="userSpaceOnUse">
          <circle cx="1" cy="1" r="1" fill="#a8a8cc" />
        </pattern>
      </defs>
      <rect width="1630" height="540" fill="url(#houses)" />
      <rect x="690" width="940" height="540" fill="url(#housesEast)" />
      {parks.map((p, i) => (
        <path key={i} d={p.d} fill={p.f} transform={`translate(${SHEETS[p.s]} -9) scale(${1 / UNIT})`} />
      ))}
      <path d="M777 348 L818 339 L829 394 L786 402 Z" fill="url(#gravel)" opacity="0.6" />
      {water.map((w, i) => (
        <path key={i} d={w.d} fill="#aad3df" transform={`translate(${SHEETS[w.s]} -9) scale(${1 / UNIT})`} />
      ))}
      <Lines list={alleys} color="#c4b8af" width={14} />
      <Lines list={alleys} color="#fff" width={10} />
      <Lines list={footways} color="rgba(255,255,255,0.35)" width={6} />
      <Lines list={footways} color="#f58f86" width={4} dash="8 6" cap="butt" />
      <Lines list={[{ s: "a", d: "M0 935 L670 1140" }]} color="#b9b9c4" width={18} />
      <Lines list={[{ s: "a", d: "M0 935 L670 1140" }]} color="#dddde4" width={14} />
      <Lines list={cycle} color="#2b2bd0" width={4} dash="8 7" cap="butt" />
      <Lines list={[{ s: "a", d: "M290 280 L340 430 L400 570 L500 640 L560 700 L695 920 L700 1020 L640 1070 M20 1180 L640 1195 M30 1275 L220 1255 L290 1200" }]} color="#2a8a2a" width={4} dash="12 7" cap="butt" />
      <Lines list={tunnels} color="#8a8a8a" width={5} dash="20 14" cap="butt" />
      <Lines list={ferries} color="#6f7fe0" width={3} dash="16 12" cap="butt" />
      <Lines list={lanes} color="#b5aaa2" width={24} />
      <Lines list={avenues} color="#b5aaa2" width={34} />
      <Lines list={lanes} color="#fff" width={21} />
      <Lines list={avenues} color="#fff" width={31} />
      <Lines list={yellow} color="#a8a85c" width={24} />
      <Lines list={yellow} color="#f7fabf" width={20} />
      <Lines list={primary} color="#b5834a" width={28} />
      <Lines list={primary} color="#fcd6a4" width={25} />
      <Lines list={trunk} color="#d2694c" width={36} />
      <Lines list={trunk} color="#f9b29c" width={33} />
      <path d="M1129 412 L1180 440 L1156 470 L1128 540 L1100 540 L1100 448 Z" fill="#8d8782" />
      <path d="M1104 540 L1106 450 L1130 418 M1110 540 L1113 452 L1138 424 M1117 540 L1121 456 L1146 430 M1124 540 L1130 462 L1156 434 M1130 535 L1140 468 L1164 440" fill="none" stroke="#5c5c5c" strokeWidth="4" strokeDasharray="12 2" />
      <path d="M868 224 L922 262 L946 288 L920 282 L872 244 Z" fill="#a29a94" />
      <path d="M872 230 L925 270 M870 238 L920 276 M880 232 L930 268" fill="none" stroke="#666" strokeWidth="2" strokeDasharray="10 3" />
      <Lines list={[{ s: "c", d: "M800 120 L825 410" }]} color="#777" width={13} dash="26 4" cap="butt" />
      <Lines list={rails} color="#4e4e4e" width={34} cap="butt" />
      <Lines list={rails} color="#e4e4e4" width={30} cap="butt" />
      <Lines list={rails} color="#707070" width={27} cap="butt" />
      <Lines list={rails} color="#8f8f8f" width={15} dash="26 8" cap="butt" />
      <Lines list={rails} color="#dcdcdc" width={3} dash="22 10" cap="butt" />
      <Lines list={[{ s: "c", d: "M900 410 L1010 400 Q1045 390 1050 340 Q1055 300 1085 300" }]} color="#333" width={26} cap="butt" />
      <Lines list={[{ s: "c", d: "M900 410 L1010 400 Q1045 390 1050 340 Q1055 300 1095 300" }]} color="#fff" width={21} cap="butt" />
      {stops.map(([s, x, y], i) => (
        <rect key={i} x={px(s, x) - 3} y={py(y) - 3} width="6" height="6" fill="#7981b0" />
      ))}
      {castles.map(([s, x, y], i) => (
        <path key={i} transform={`translate(${px(s, x) - 7} ${py(y) - 6})`} fill="#734a08" d="M0 2 h3 v2 h2 v-2 l2 -2 l2 2 v2 h2 v-2 h3 v10 h-5 v-3 a2 2 0 0 0 -4 0 v3 h-5 z" />
      ))}
      {anchors.map(([s, x, y], i) => (
        <path key={i} transform={`translate(${px(s, x)} ${py(y)})`} fill="none" stroke="#8461c4" strokeWidth="1.5" d="M0 -4 V6 M-3 -2 H3 M-5 2 Q-4 6 0 6 Q4 6 5 2 M0 -7 a1.5 1.5 0 1 0 .1 0" />
      ))}
      {labels.map(([s, text, x, y, kind, turn], i) => {
        const k = kinds[kind];
        const cx = px(s, x);
        const cy = py(y);
        return (
          <text
            key={i}
            x={cx}
            y={turn ? cy + 2 : cy}
            transform={turn ? `rotate(${turn} ${cx} ${cy})` : undefined}
            textAnchor="middle"
            fontFamily={`"Noto Sans", sans-serif`}
            fontSize={k.size}
            fontWeight={k.weight ?? 400}
            fontStyle={k.italic ? "italic" : "normal"}
            fill={k.fill}
            stroke={kind === "main" ? "none" : "rgba(255,255,255,0.65)"}
            strokeWidth="2"
            strokeLinejoin="round"
            paintOrder="stroke"
          >
            {text}
          </text>
        );
      })}
      {shields.map(([s, text, x, y, fill], i) => {
        const w = text.length * 6 + 9;
        return (
          <g key={i}>
            <rect x={px(s, x) - w / 2} y={py(y) - 8} width={w} height="17" rx="2" fill={fill} stroke="#c9a98a" />
            <text x={px(s, x)} y={py(y) + 4} textAnchor="middle" fontFamily={`"Noto Sans", sans-serif`} fontSize="10" fontWeight="400" fill="#5a3d22">{text}</text>
          </g>
        );
      })}
      <g transform="translate(1258 536)">
        <circle r="7" fill="#bf0f1f" />
        <path d="M-4 0 H4 M0 -4 V4" stroke="#fff" strokeWidth="2" />
      </g>
      <g transform="translate(802 250)">
        <path d="M12.5 40 C11 31 1 22 1 12.5 A11.5 11.5 0 0 1 24 12.5 C24 22 14 31 12.5 40 Z" fill="#2b82cb" stroke="#2a6ea6" />
        <circle cx="12.5" cy="12.5" r="4.5" fill="#fff" />
      </g>
    </svg>
  );
}

/* ---------- brand logos ---------- */

const brandLogos: { name: string; art: React.ReactNode }[] = [
  {
    name: "Uriage",
    art: (
      <>
        <text x="50" y="26" textAnchor="middle" fontFamily="Lato" fontWeight="400" fontSize="24">URIAGE</text>
        <text x="50" y="38" textAnchor="middle" fontFamily="Lato" fontWeight="400" fontSize="7" letterSpacing="3">EAU THERMALE</text>
      </>
    ),
  },
  { name: "Tocobo", art: <text x="50" y="30" textAnchor="middle" fontFamily="Lato" fontWeight="500" fontSize="20">TOCOBO</text> },
  {
    name: "SVR",
    art: (
      <>
        <text x="50" y="29" textAnchor="middle" fontFamily="Liberation Serif" fontWeight="400" fontSize="25">SVR</text>
        <path d="M27 33 h46 v1 h-46 z" />
      </>
    ),
  },
  {
    name: "Payot",
    art: (
      <>
        <text x="50" y="26" textAnchor="middle" fontFamily="Lato" fontWeight="500" fontSize="26">PAYOT</text>
        <text x="50" y="34" textAnchor="middle" fontFamily="Lato" fontWeight="400" fontSize="5" letterSpacing="2">PARIS</text>
      </>
    ),
  },
  {
    name: "Mizon",
    art: (
      <>
        <path d="M7 16 q6 1 6 6 h-6 z M21 16 q-6 1 -6 6 h6 z M7 23 h6 v7 q-6 -1 -6 -7 z M21 23 h-6 v7 q6 -1 6 -7 z" />
        <text x="62" y="28" textAnchor="middle" fontFamily="Inter" fontWeight="800" fontSize="14" letterSpacing="4">MIZON</text>
      </>
    ),
  },
  {
    name: "CeraVe",
    art: (
      <>
        <path d="M53 10 h34 v27 h-23 z" />
        <text x="12" y="32" fontFamily="Lato" fontWeight="400" fontSize="22">Cera</text>
        <text x="58" y="32" fontFamily="Lato" fontWeight="400" fontSize="22" fill="#fff">Ve</text>
        <path d="M14 35 h45 v1 h-45 z" opacity="0.6" />
      </>
    ),
  },
  {
    name: "Caudalie",
    art: (
      <>
        <text x="50" y="29" textAnchor="middle" fontFamily="Lato" fontWeight="400" fontSize="18">CAUDALÍE</text>
        <text x="50" y="37" textAnchor="middle" fontFamily="Lato" fontWeight="400" fontSize="5" letterSpacing="1">PARIS</text>
      </>
    ),
  },
];

/* ---------- footer data ---------- */

const linkGroups = [
  { title: "Popular Categories", links: ["Face Mask", "Cleanser", "Hair Care", "Toner / Mist", "Sun Protection"] },
  { title: "Product Type", links: ["Truck My Orders", "Terms & Conditions", "Suppliers", "Careers"] },
  { title: "Useful Links", links: ["About Us", "Contact Us", "Blog"] },
];

export default function App() {
  return (
    <>
      <GlobalStyle />
      <Frame>
        <div>
          <TopBar>
            <TopRow>
              <TopGroup>
                <TopLink href="#">Referral program</TopLink>
                <TopLink href="#">Payment and delivery</TopLink>
              </TopGroup>
              <TopGroup>
                <TopSocial>
                  {socials.map(({ name, Icon }) => (
                    <a key={name} href="#" aria-label={name}><Icon size={14} /></a>
                  ))}
                </TopSocial>
                <TopDivider />
                <TopLink href="#">Blog</TopLink>
                <TopLink href="#">About us</TopLink>
                <TopLink href="#" $muted>Contact us</TopLink>
              </TopGroup>
            </TopRow>
          </TopBar>

          <Header>
            <HeaderRow>
              <Nav>
                {["Skincare", "Body", "Makeup", "Hair", "Sunscreen"].map((n) => (
                  <NavLink key={n} href="#">{n}</NavLink>
                ))}
                <CjkLink href="#" lang="zh-CN">
                  <svg width="18" height="12" viewBox="0 0 18 12" aria-hidden="true">
                    <rect width="18" height="12" fill="#ff4b55" />
                    <path d="M3 1 L4 3 H6 L4 4 L5 6 L3 5 L1 6 L2 4 L0 3 H2 Z" fill="#ff9b3d" />
                  </svg>
                  简体中文
                </CjkLink>
              </Nav>
              <LogoLink href="#"><Logo /></LogoLink>
              <Tools>
                <ToolLink href="#">Login / Register</ToolLink>
                <ToolDivider />
                <ToolLink href="#">
                  <svg width="20" height="20" viewBox="0 0 20 20" fill="none" stroke="#333" strokeWidth="1.3" aria-hidden="true">
                    <circle cx="8" cy="8" r="7" />
                    <path d="M13 13 L19.500 19.500" />
                  </svg>
                  Search
                </ToolLink>
                <ToolLink href="#" $count aria-label="Wishlist, 0 items">
                  <svg width="20" height="20" viewBox="0 0 20 20" fill="none" stroke="#333" strokeWidth="1.3" aria-hidden="true">
                    <path d="M10 18.500 L2.500 10.500 Q-.5 6 2.500 3 Q6.500 0 10 4 Q13.500 0 17.500 3 Q20.500 6 17.500 10.500 Z" />
                  </svg>
                  0
                </ToolLink>
                <ToolLink href="#" $count>
                  <svg width="20" height="20" viewBox="0 0 20 20" fill="none" stroke="#333" strokeWidth="1.3" aria-hidden="true">
                    <path d="M0 1.500 H3 L6 14 H17 M4 5 H19 L17 11.500 H5.500" />
                    <circle cx="7" cy="17.500" r="1" fill="#333" />
                    <circle cx="16" cy="17.500" r="1" fill="#333" />
                  </svg>
                  50 / $1,372.00
                </ToolLink>
              </Tools>
            </HeaderRow>
          </Header>

          <Container as="main">
            <PageTitle>
              <Heading as="h1">Contact us</Heading>
              <Crumbs aria-label="Breadcrumb">
                <a href="#">Home</a>
                <span>/</span>
                <span>Contact us</span>
              </Crumbs>
            </PageTitle>

            <MapBox>
              <LondonMap />
              <ZoomControl>
                <ZoomButton type="button" aria-label="Zoom in">+</ZoomButton>
                <ZoomButton type="button" aria-label="Zoom out">−</ZoomButton>
              </ZoomControl>
              <Attribution>
                <svg width="12" height="8" viewBox="0 0 12 8" aria-hidden="true">
                  <path fill="#4c7be1" d="M0 0h12v4H0z" />
                  <path fill="#ffd500" d="M0 4h12v4H0z" />
                </svg>
                <a href="#">Leaflet</a>
                <span>| ©</span>
                <a href="#">OpenStreetMap</a>
                <span>contributors</span>
              </Attribution>
            </MapBox>

            <Cards>
              <Card $blue>
                <Heading $light>Address</Heading>
                <InfoText><InfoLink href="#">2116 W McCormick St, Wichita, KS 67213, USA</InfoLink></InfoText>
                <InfoText>
                  Monday - Tuesday 10.00am - 6.00pm (By Appointment Only)
                  <br />
                  Wednesday - Saturday, 11.00am — 5.00pm
                  <br />
                  Sunday, Closed
                </InfoText>
                <InfoColumns>
                  <div>
                    <Heading $light>Phone</Heading>
                    <InfoText><InfoLink href="#">(316) 389-7041</InfoLink></InfoText>
                  </div>
                  <div>
                    <Heading $light>Email</Heading>
                    <InfoText><InfoLink href="#">xtemos.studio@gmail.com</InfoLink></InfoText>
                  </div>
                </InfoColumns>
              </Card>
              <Card>
                <Heading>How We Start Our Business</Heading>
                <Form onSubmit={(e) => e.preventDefault()}>
                  <Field><TextInput type="text" placeholder="Your name" aria-label="Your name" /></Field>
                  <Field><TextInput type="email" placeholder="Your Email" aria-label="Your Email" /></Field>
                  <Field $wide><TextInput type="text" placeholder="Customer care" aria-label="Customer care" /></Field>
                  <Field $wide><TextArea placeholder="Your Message" aria-label="Your Message" /></Field>
                  <Pill $tone="blue" type="submit">Ask A Question</Pill>
                </Form>
              </Card>
            </Cards>

            <Brands>
              {brandLogos.map((b) => (
                <Brand key={b.name}>
                  <svg width="100" height="46" viewBox="0 0 100 46" role="img" aria-label={b.name}>{b.art}</svg>
                </Brand>
              ))}
            </Brands>

            <Article>
              <Heading>Makeup for special events: shine uniquely!</Heading>
              <p>
                A special day requires a special look, and bright makeup will be its highlight. Regardless of whether it is a wedding, a corporate event, or a romantic dinner, the right makeup will help you feel confident and unforgettable. An effective skincare routine starts with an effective <em>cleansing</em> routine. Far from being the overly aggressive detergents of yesteryear, today’s cleansers often have gentle, mild formulas that work well with the specific needs of different skin types, removing impurities and make-up residue without stripping the skin of its natural oils.
              </p>
              <Heading as="h3" $small>Make-up should harmonize with your outfit, hairstyle and accessories.</Heading>
              <p>
                If you’ve been following Care to Beauty for a while, you that our specialty is French pharmacy skincare. These were the first brands we worked with and we continue to identify with their ethos—for us, there’s nothing better than gentle skincare products that focus on resolving skin concerns without disrupting the skin barrier.
              </p>
              <p>
                If you’re looking to replenish your skincare stash with French pharmacy products at discounted prices, we have offers of up to 50%—time to stock up on iconic moisturizers like Avenge Tolerance Control Soothing Skin Recovery
              </p>
            </Article>
            <ReadMore>
              <Pill $tone="white" type="button">
                Read More
                <svg width="14" height="8" viewBox="0 0 14 8" fill="none" stroke="#242424" strokeWidth="1.5" aria-hidden="true"><path d="M1 1 L7 7 L13 1" /></svg>
              </Pill>
            </ReadMore>
          </Container>

          <Footer>
            <Container>
              <FooterBox>
                <FooterMain>
                  <About>
                    <Logo dark />
                    <p>WordPress WP themes, plugins, personal and foreign trade enterprise website construction, optimization, and promotion.</p>
                    <Payments>
                      <li><SiVisa size={32} aria-label="Visa" /></li>
                      <li><FaStripe size={36} aria-label="Stripe" /></li>
                      <PayPalMark>PayPal</PayPalMark>
                      <li><FaGooglePay size={34} aria-label="Google Pay" /></li>
                      <li><FaApplePay size={34} aria-label="Apple Pay" /></li>
                    </Payments>
                  </About>
                  {linkGroups.map((g) => (
                    <div key={g.title}>
                      <LinkTitle>{g.title}</LinkTitle>
                      <LinkList>
                        {g.links.map((l) => (
                          <li key={l}><a href="#">{l}</a></li>
                        ))}
                      </LinkList>
                    </div>
                  ))}
                </FooterMain>
                <Review>
                  <Score>4,5<small>/5</small></Score>
                  <Stars role="img" aria-label="4.5 out of 5 stars">
                    <FaStar size={16} /><FaStar size={16} /><FaStar size={16} /><FaStar size={16} />
                    <HalfStar><FaRegStar size={16} /><FaStarHalf size={16} /></HalfStar>
                  </Stars>
                  <ReviewLink href="#">Based on 374 Google reviews</ReviewLink>
                  <Pill $tone="outline" type="button">Write A Review</Pill>
                </Review>
              </FooterBox>
              <Bottom>
                <p><b>WoodMart</b> theme 2025 <b>WooCommerce Themes.</b></p>
                <Circles>
                  {socials.map(({ name, Icon }) => (
                    <Circle key={name} href="#" aria-label={name}><Icon size={14} /></Circle>
                  ))}
                </Circles>
              </Bottom>
            </Container>
          </Footer>
        </div>
        <ScrollTrack aria-hidden="true">
          <Arrow />
          <Arrow $down />
        </ScrollTrack>
      </Frame>
    </>
  );
}
